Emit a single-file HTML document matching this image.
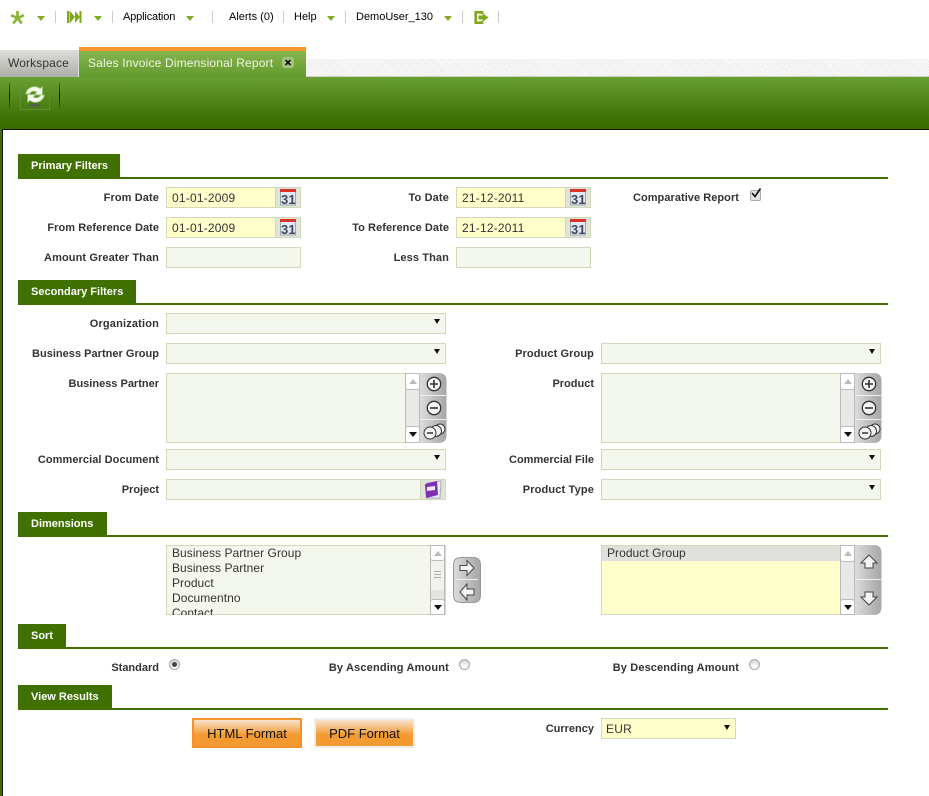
<!DOCTYPE html>
<html><head><meta charset="utf-8"><style>
html,body{margin:0;padding:0;background:#fff}
#p{position:relative;width:929px;height:796px;overflow:hidden;font-family:"Liberation Sans",sans-serif;background:#fff}
#p div,#p span.a,#p svg.a{position:absolute}
.n{font-size:11px;color:#000;top:11px;line-height:13px;white-space:nowrap}
.sep{width:1px;height:12px;top:11px;background:#ccc}
.dd{width:0;height:0;top:16px;border-left:4.5px solid transparent;border-right:4.5px solid transparent;border-top:5px solid #84ab22}
.sec{left:18px;height:23px;background:#3f7000;color:#fff;font-weight:bold;font-size:11px;line-height:25px;padding-left:13px;box-sizing:border-box}
.ln{left:18px;width:870px;height:2px;background:#3f7000}
.l{font-weight:bold;font-size:11px;color:#333;text-align:right;line-height:13px;white-space:nowrap;width:200px}
.f{box-sizing:border-box;border:1px solid #d2d9b9;background:#f4f7ee;height:21px;font-size:12px;color:#333;line-height:21px;padding-left:5px;white-space:nowrap;letter-spacing:.2px}
.y{background:#ffffcc}
.b{top:0;right:0;width:25px;height:19px;background:#e2e4da;border-left:1px solid #d2d9b9;box-sizing:border-box}
.ar{width:0;height:0;right:5px;top:5px;border-left:3.5px solid transparent;border-right:3.5px solid transparent;border-top:5px solid #111}
.t{font-size:12px;color:#333;line-height:15px;left:172px;white-space:nowrap;letter-spacing:.05px}
.btn{box-sizing:border-box;background:#f39a30;font-size:13px;color:#111;text-align:center;line-height:27px}
.gl{left:0;right:0;top:0;height:15px;background:linear-gradient(#f8e3cd,#f39a30)}
.rd{width:11px;height:11px;border-radius:50%;box-sizing:border-box;border:1px solid #aaa;background:radial-gradient(circle at 50% 80%,#fff 15%,#c8c8c8)}
.cal{font-family:"Liberation Sans",sans-serif;font-weight:bold;font-size:13px;fill:#445}
</style></head><body><div id="p">

<svg class="a" style="left:10px;top:10px" width="15" height="15" viewBox="0 0 15 15"><g stroke="#8db53a" stroke-width="2.7" fill="none"><path d="M7.5 1V8M7.5 8L3.2 13.5M7.5 8L11.8 13.5M1 5.2L7.5 8L14 5.2"/></g></svg>
<div class="dd" style="left:37px"></div>
<div class="sep" style="left:55px"></div>
<svg class="a" style="left:66px;top:10px" width="16" height="14" viewBox="0 0 16 14"><path d="M1 1H3.5V13H1ZM4 1L9 7L4 13ZM9 1L14 7L9 13ZM13.5 1H15.5V13H13.5Z" fill="#7fa81e"/></svg>
<div class="dd" style="left:94px"></div>
<div class="sep" style="left:112px"></div>
<div class="n" style="left:123px;letter-spacing:-.15px">Application</div>
<div class="dd" style="left:186px"></div>
<div class="sep" style="left:212px"></div>
<div class="n" style="left:229px">Alerts (0)</div>
<div class="sep" style="left:283px"></div>
<div class="n" style="left:294px">Help</div>
<div class="dd" style="left:327px"></div>
<div class="sep" style="left:345px"></div>
<div class="n" style="left:356px">DemoUser_130</div>
<div class="dd" style="left:444px"></div>
<div class="sep" style="left:462px"></div>
<svg class="a" style="left:473px;top:10px" width="16" height="15" viewBox="0 0 16 15"><path d="M9 4V2.3H2.7V12.7H9V11" fill="none" stroke="#7fa81e" stroke-width="2.6"/><path d="M5.5 5.5H9.5V3L15.5 7.5L9.5 12V9.5H5.5Z" fill="#7fa81e"/></svg>
<div class="sep" style="left:498px"></div>

<!-- tabs -->
<div style="left:306px;top:59px;width:623px;height:17px;background:repeating-linear-gradient(45deg,#e8e8e8 0 1px,#fff 1px 2px)"></div>
<div style="left:0;top:76px;width:929px;height:1px;background:#ccc"></div>
<div style="left:0;top:50px;width:79px;height:27px;box-sizing:border-box;border-top:1px solid #ddd;border-right:1px solid #ddd;background:linear-gradient(#dcdcd8,#aeaea8);color:#333;font-size:12px;line-height:25px;padding-left:8px;letter-spacing:.12px">Workspace</div>
<div style="left:79px;top:47px;width:227px;height:30px;box-sizing:border-box;border-top:4px solid #f6962d;background:linear-gradient(#87b54e,#639a2e);color:#eef5e2;font-size:12px;line-height:24px;padding-left:9px;white-space:nowrap;letter-spacing:.16px">Sales Invoice Dimensional Report</div>
<div style="left:282px;top:57px;width:12px;height:11px;border-radius:3px;background:#a3c481"></div>
<svg class="a" style="left:282px;top:57px" width="12" height="11" viewBox="0 0 12 11"><path d="M3.5 3L8.5 8M8.5 3L3.5 8" stroke="#111" stroke-width="1.6"/></svg>

<!-- green bar -->
<div style="left:0;top:77px;width:929px;height:52px;background:linear-gradient(#6a9f32 0,#3a6c00 90%)"></div>
<div style="left:9px;top:83px;width:1px;height:25px;background:linear-gradient(#3a6c00,#111 50%,#3a6c00)"></div>
<div style="left:59px;top:83px;width:1px;height:25px;background:linear-gradient(#3a6c00,#111 50%,#3a6c00)"></div>
<div style="left:20px;top:82px;width:30px;height:28px;box-sizing:border-box;border:1px solid #5f8f30;border-top-color:transparent"></div>
<svg class="a" style="left:24px;top:84px" width="22" height="24" viewBox="0 0 22 24"><ellipse cx="11" cy="21" rx="6" ry="1.8" fill="#55624a"/><path d="M1.5 10C3 3 11 0.5 16 4.5L18.5 2.5V11H10L12.5 8C9.5 6.5 7 7.5 5.5 10Z" fill="#f2f8ea" stroke="#8fbf68" stroke-width=".8"/><path d="M20.5 11C19 18 11 20.5 6 16.5L3.5 18.5V10.5H12L9.5 13C12.5 14.5 15 13.5 16.5 11Z" fill="#f2f8ea" stroke="#8fbf68" stroke-width=".8"/></svg>

<!-- content frame -->
<div style="left:0;top:129px;width:2px;height:667px;background:#3a6c00"></div>
<div style="left:2px;top:129px;width:927px;height:1px;background:#111"></div>
<div style="left:2px;top:129px;width:1px;height:667px;background:#111"></div>

<!-- primary -->
<div class="sec" style="top:154px;width:102px">Primary Filters</div><div class="ln" style="top:177px"></div>
<div class="l" style="left:-41px;top:192px;letter-spacing:.11px">From Date</div>
<div class="f y" style="left:166px;top:187px;width:135px">01-01-2009<div class="b"><svg class="a" style="left:3px;top:0" width="19" height="18" viewBox="0 0 19 18"><rect x="1.5" y="2" width="15" height="15" fill="#dfe9f7" stroke="#9aa"/><rect x="1" y="1" width="16" height="3" fill="#d9342b"/><text x="2" y="16" class="cal">31</text></svg></div></div>
<div class="l" style="left:249px;top:192px;letter-spacing:.14px">To Date</div>
<div class="f y" style="left:456px;top:187px;width:135px">21-12-2011<div class="b"><svg class="a" style="left:3px;top:0" width="19" height="18" viewBox="0 0 19 18"><rect x="1.5" y="2" width="15" height="15" fill="#dfe9f7" stroke="#9aa"/><rect x="1" y="1" width="16" height="3" fill="#d9342b"/><text x="2" y="16" class="cal">31</text></svg></div></div>
<div class="l" style="left:539px;top:192px;letter-spacing:.05px">Comparative Report</div>
<div style="left:750px;top:190px;width:11px;height:11px;box-sizing:border-box;border:1px solid #aaa;border-radius:2px;background:#e4e4e4"></div>
<svg class="a" style="left:750px;top:187px" width="12" height="12" viewBox="0 0 12 12"><path d="M2 6L5 9.5L10.5 1.5" fill="none" stroke="#111" stroke-width="1.7"/></svg>

<div class="l" style="left:-41px;top:222px;letter-spacing:.05px">From Reference Date</div>
<div class="f y" style="left:166px;top:217px;width:135px">01-01-2009<div class="b"><svg class="a" style="left:3px;top:0" width="19" height="18" viewBox="0 0 19 18"><rect x="1.5" y="2" width="15" height="15" fill="#dfe9f7" stroke="#9aa"/><rect x="1" y="1" width="16" height="3" fill="#d9342b"/><text x="2" y="16" class="cal">31</text></svg></div></div>
<div class="l" style="left:249px;top:222px;letter-spacing:.06px">To Reference Date</div>
<div class="f y" style="left:456px;top:217px;width:135px">21-12-2011<div class="b"><svg class="a" style="left:3px;top:0" width="19" height="18" viewBox="0 0 19 18"><rect x="1.5" y="2" width="15" height="15" fill="#dfe9f7" stroke="#9aa"/><rect x="1" y="1" width="16" height="3" fill="#d9342b"/><text x="2" y="16" class="cal">31</text></svg></div></div>
<div class="l" style="left:-41px;top:252px;letter-spacing:.1px">Amount Greater Than</div>
<div class="f" style="left:166px;top:247px;width:135px"></div>
<div class="l" style="left:249px;top:252px;letter-spacing:.11px">Less Than</div>
<div class="f" style="left:456px;top:247px;width:135px"></div>

<!-- secondary -->
<div class="sec" style="top:280px;width:118px">Secondary Filters</div><div class="ln" style="top:303px"></div>
<div class="l" style="left:-41px;top:318px;letter-spacing:.17px">Organization</div>
<div class="f" style="left:166px;top:313px;width:280px"><div class="ar"></div></div>
<div class="l" style="left:-41px;top:348px;letter-spacing:.02px">Business Partner Group</div>
<div class="f" style="left:166px;top:343px;width:280px"><div class="ar"></div></div>
<div class="l" style="left:394px;top:348px;letter-spacing:.1px">Product Group</div>
<div class="f" style="left:601px;top:343px;width:280px"><div class="ar"></div></div>

<div class="l" style="left:-41px;top:378px">Business Partner</div>
<div class="f" style="left:166px;top:373px;width:240px;height:70px"></div>
<div style="left:405px;top:373px;width:15px;height:70px;background:#e8e8e4;box-sizing:border-box;border:1px solid #bbb"></div>
<div style="left:405px;top:373px;width:15px;height:17px;background:#fff;border:1px solid #bbb;box-sizing:border-box;border-radius:0 0 3px 3px"></div>
<div style="left:409px;top:379px;width:0;height:0;border-left:4px solid transparent;border-right:4px solid transparent;border-bottom:5px solid #bbb"></div>
<div style="left:405px;top:426px;width:15px;height:17px;background:#fff;border:1px solid #bbb;box-sizing:border-box;border-radius:3px 3px 0 0"></div>
<div style="left:409px;top:432px;width:0;height:0;border-left:4px solid transparent;border-right:4px solid transparent;border-top:5px solid #111"></div>
<svg class="a" style="left:420px;top:373px" width="27" height="70" viewBox="0 0 27 70"><defs><linearGradient id="g" x1="0" x2="1"><stop offset="0" stop-color="#dcdcdc"/><stop offset="1" stop-color="#a6a6a6"/></linearGradient></defs><path d="M0 0H18.5Q26.5 0 26.5 8V62Q26.5 70 18.5 70H0Z" fill="url(#g)"/><path d="M0 22.5H26M0 46.5H26" stroke="#eee"/><circle cx="14" cy="11" r="6.7" fill="#f4f4f4" stroke="#333" stroke-width="1.3"/><path d="M10 11H18M14 7V15" stroke="#333" stroke-width="1.6"/><circle cx="14" cy="35" r="6.7" fill="#f4f4f4" stroke="#333" stroke-width="1.3"/><path d="M10 35H18" stroke="#333" stroke-width="1.6"/><circle cx="20" cy="56" r="5" fill="#f4f4f4" stroke="#333"/><circle cx="16" cy="58" r="5.5" fill="#f4f4f4" stroke="#333"/><circle cx="10" cy="60" r="6" fill="#f4f4f4" stroke="#333"/><path d="M7 60H13" stroke="#333" stroke-width="1.5"/></svg>

<div class="l" style="left:394px;top:378px">Product</div>
<div class="f" style="left:601px;top:373px;width:240px;height:70px"></div>
<div style="left:840px;top:373px;width:15px;height:70px;background:#e8e8e4;box-sizing:border-box;border:1px solid #bbb"></div>
<div style="left:840px;top:373px;width:15px;height:17px;background:#fff;border:1px solid #bbb;box-sizing:border-box;border-radius:0 0 3px 3px"></div>
<div style="left:844px;top:379px;width:0;height:0;border-left:4px solid transparent;border-right:4px solid transparent;border-bottom:5px solid #bbb"></div>
<div style="left:840px;top:426px;width:15px;height:17px;background:#fff;border:1px solid #bbb;box-sizing:border-box;border-radius:3px 3px 0 0"></div>
<div style="left:844px;top:432px;width:0;height:0;border-left:4px solid transparent;border-right:4px solid transparent;border-top:5px solid #111"></div>
<svg class="a" style="left:855px;top:373px" width="27" height="70" viewBox="0 0 27 70"><path d="M0 0H18.5Q26.5 0 26.5 8V62Q26.5 70 18.5 70H0Z" fill="url(#g)"/><path d="M0 22.5H26M0 46.5H26" stroke="#eee"/><circle cx="14" cy="11" r="6.7" fill="#f4f4f4" stroke="#333" stroke-width="1.3"/><path d="M10 11H18M14 7V15" stroke="#333" stroke-width="1.6"/><circle cx="14" cy="35" r="6.7" fill="#f4f4f4" stroke="#333" stroke-width="1.3"/><path d="M10 35H18" stroke="#333" stroke-width="1.6"/><circle cx="20" cy="56" r="5" fill="#f4f4f4" stroke="#333"/><circle cx="16" cy="58" r="5.5" fill="#f4f4f4" stroke="#333"/><circle cx="10" cy="60" r="6" fill="#f4f4f4" stroke="#333"/><path d="M7 60H13" stroke="#333" stroke-width="1.5"/></svg>

<div class="l" style="left:-41px;top:454px;letter-spacing:.07px">Commercial Document</div>
<div class="f" style="left:166px;top:449px;width:280px"><div class="ar"></div></div>
<div class="l" style="left:394px;top:454px">Commercial File</div>
<div class="f" style="left:601px;top:449px;width:280px"><div class="ar"></div></div>
<div class="l" style="left:-41px;top:484px">Project</div>
<div class="f" style="left:166px;top:479px;width:280px"><div class="b"></div>
<svg class="a" style="left:254px;top:0" width="22" height="19" viewBox="0 0 22 19"><path d="M6 3L20 1L19 18L6 18Z" fill="#e6eefa" stroke="#aab"/><path d="M4 4L16 1L17 15L5 18Z" fill="#7e2fb5"/><path d="M6 7L14 6V10L6 11Z" fill="#f2e8fa"/></svg></div>
<div class="l" style="left:394px;top:484px;letter-spacing:.15px">Product Type</div>
<div class="f" style="left:601px;top:479px;width:280px"><div class="ar"></div></div>

<!-- dimensions -->
<div class="sec" style="top:512px;width:89px">Dimensions</div><div class="ln" style="top:535px"></div>
<div class="f" style="left:166px;top:545px;width:280px;height:70px;overflow:hidden"></div>
<div class="t" style="top:546px">Business Partner Group</div>
<div class="t" style="top:561px">Business Partner</div>
<div class="t" style="top:576px">Product</div>
<div class="t" style="top:591px">Documentno</div>
<div style="left:172px;top:606px;height:9px;overflow:hidden;font-size:12px;color:#333;line-height:15px">Contact</div>
<div style="left:430px;top:545px;width:15px;height:69px;background:#e4e4e0;box-sizing:border-box;border:1px solid #bbb"></div>
<div style="left:431px;top:560px;width:13px;height:30px;background:#f2f2ee"></div>
<div style="left:434px;top:571px;width:7px;height:1px;background:#aaa;box-shadow:0 3px #aaa,0 6px #aaa"></div>
<div style="left:430px;top:545px;width:15px;height:16px;background:#fff;border:1px solid #bbb;box-sizing:border-box;border-radius:0 0 3px 3px"></div>
<div style="left:434px;top:551px;width:0;height:0;border-left:4px solid transparent;border-right:4px solid transparent;border-bottom:5px solid #bbb"></div>
<div style="left:430px;top:599px;width:15px;height:16px;background:#fff;border:1px solid #bbb;box-sizing:border-box;border-radius:3px 3px 0 0"></div>
<div style="left:434px;top:605px;width:0;height:0;border-left:4px solid transparent;border-right:4px solid transparent;border-top:5px solid #111"></div>
<svg class="a" style="left:453px;top:557px" width="28" height="46" viewBox="0 0 28 46"><path d="M8 .5H20Q27.5 .5 27.5 8V38Q27.5 45.5 20 45.5H8Q.5 45.5 .5 38V8Q.5 .5 8 .5Z" fill="url(#g)" stroke="#999"/><path d="M3 22.5H25" stroke="#eee"/><path d="M7 8.5H14V3.5L21 11L14 18.5V13.5H7Z" fill="#f4f4f4" stroke="#444"/><path d="M21 32H14V27L7 35L14 43V38H21Z" fill="#f4f4f4" stroke="#444"/></svg>

<div class="f y" style="left:601px;top:545px;width:240px;height:70px"></div>
<div style="left:602px;top:546px;width:238px;height:15px;background:#e0e0dc;font-size:12px;color:#333;line-height:15px;padding-left:5px;box-sizing:border-box;letter-spacing:.05px">Product Group</div>
<div style="left:840px;top:545px;width:15px;height:69px;background:#e8e8e4;box-sizing:border-box;border:1px solid #bbb"></div>
<div style="left:840px;top:545px;width:15px;height:17px;background:#fff;border:1px solid #bbb;box-sizing:border-box;border-radius:0 0 3px 3px"></div>
<div style="left:844px;top:551px;width:0;height:0;border-left:4px solid transparent;border-right:4px solid transparent;border-bottom:5px solid #bbb"></div>
<div style="left:840px;top:599px;width:15px;height:16px;background:#fff;border:1px solid #bbb;box-sizing:border-box;border-radius:3px 3px 0 0"></div>
<div style="left:844px;top:605px;width:0;height:0;border-left:4px solid transparent;border-right:4px solid transparent;border-top:5px solid #111"></div>
<svg class="a" style="left:855px;top:545px" width="27" height="70" viewBox="0 0 27 70"><path d="M0 0H18.5Q26.5 0 26.5 8V62Q26.5 70 18.5 70H0Z" fill="url(#g)"/><path d="M0 34.5H26" stroke="#eee"/><path d="M14 10L22 18H18V23H10V18H6Z" fill="#f4f4f4" stroke="#444"/><path d="M10 47H18V52H22L14 60L6 52H10Z" fill="#f4f4f4" stroke="#444"/></svg>

<!-- sort -->
<div class="sec" style="top:624px;width:48px">Sort</div><div class="ln" style="top:647px"></div>
<div class="l" style="left:-41px;top:662px">Standard</div>
<div class="rd" style="left:169px;top:659px"></div><div style="left:172px;top:662px;width:5px;height:5px;border-radius:50%;background:#444"></div>
<div class="l" style="left:249px;top:662px;letter-spacing:.16px">By Ascending Amount</div>
<div class="rd" style="left:459px;top:659px"></div>
<div class="l" style="left:539px;top:662px;letter-spacing:.13px">By Descending Amount</div>
<div class="rd" style="left:749px;top:659px"></div>

<!-- results -->
<div class="sec" style="top:685px;width:94px">View Results</div><div class="ln" style="top:708px"></div>
<div class="btn" style="left:192px;top:718px;width:110px;height:30px;border:2px solid #f5902a"><div class="gl"></div><span style="position:relative">HTML Format</span></div>
<div class="btn" style="left:314px;top:718px;width:101px;height:30px;border:2px solid #eee"><div class="gl"></div><span style="position:relative">PDF Format</span></div>
<div class="l" style="left:394px;top:723px">Currency</div>
<div class="f y" style="left:601px;top:718px;width:135px;padding-left:4px">EUR<div class="ar" style="top:6px"></div></div>

</div></body></html>
